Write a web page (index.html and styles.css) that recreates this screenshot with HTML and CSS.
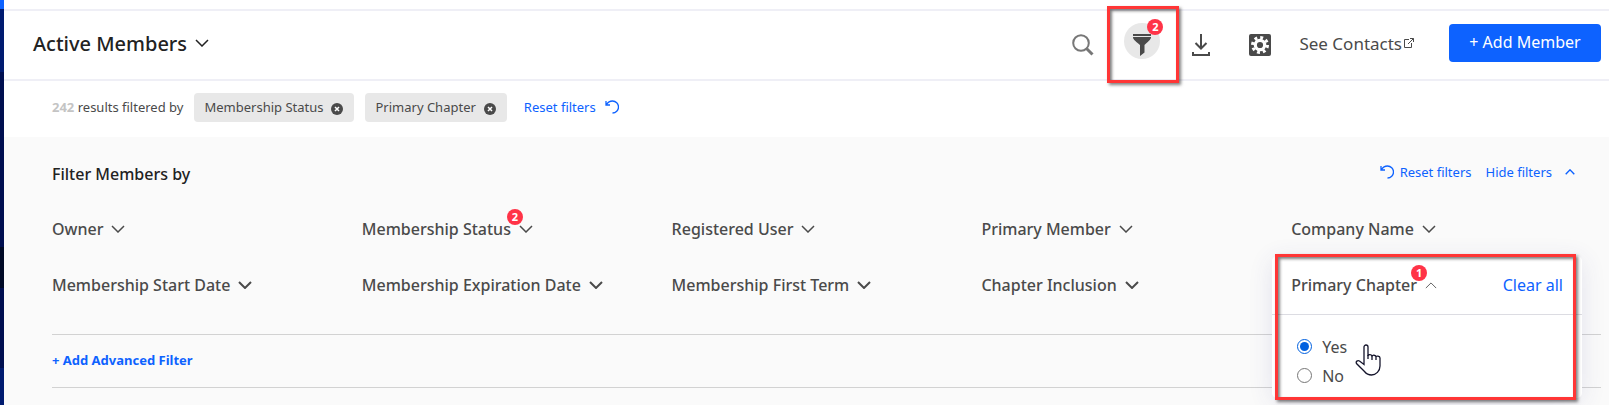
FILE: index.html
```html
<!DOCTYPE html>
<html lang="en">

<head>
    <meta charset="UTF-8">
    <meta name="viewport" content="width=device-width, initial-scale=1.0">
    <title>Active Members</title>
    <link rel="stylesheet" href="styles.css">
</head>

<body>
    <!-- shared icons -->
    <svg class="sprite" aria-hidden="true">
        <symbol id="down" viewBox="0 0 14 8">
            <path d="M1 1l6 6 6-6" fill="none" stroke="currentColor" />
        </symbol>
        <symbol id="up" viewBox="0 0 14 8">
            <path d="M1 7l6-6 6 6" fill="none" stroke="currentColor" />
        </symbol>
        <symbol id="reset" viewBox="0 0 14 14">
            <path d="M1 1v4h4M1.500 4.500C3 2 5 1 7.500 1a5.700 5.700 0 0 1 0 12" fill="none" stroke="currentColor" stroke-width="1.300" />
        </symbol>
        <symbol id="remove" viewBox="0 0 12 12">
            <circle cx="6" cy="6" r="6" fill="currentColor" />
            <path d="M4 4l4 4M8 4l-4 4" stroke="#fff" stroke-width="1.500" />
        </symbol>
    </svg>

    <div class="rail"></div>

    <div class="page">
        <header class="header">
            <button class="title">Active Members
                <svg class="chevron" width="14" height="8"><use href="#down" /></svg>
            </button>
            <div class="tools">
                <button class="tool search" aria-label="Search">
                    <svg width="22" height="22" viewBox="0 0 22 22">
                        <circle cx="9" cy="9" r="7.800" fill="none" stroke="currentColor" stroke-width="2" />
                        <path d="M14.500 14.500l6 6" stroke="currentColor" stroke-width="3" />
                    </svg>
                </button>
                <button class="tool on" aria-label="Filter">
                    <svg width="18" height="22" viewBox="0 0 18 22">
                        <path d="M0 0h18v2H0zM0 3h18c0 2-1 3-6.500 8v7.500L7 22V11C1 6 0 5 0 3z" fill="currentColor" />
                    </svg>
                    <span class="badge">2</span>
                    <span class="mark"></span>
                </button>
                <button class="tool" aria-label="Download">
                    <svg width="18" height="22" viewBox="0 0 18 22" fill="none" stroke="currentColor" stroke-width="2">
                        <path d="M9 0v14M3.500 9L9 14.500 14.500 9M1 18v3h16v-3" />
                    </svg>
                </button>
                <button class="tool" aria-label="Settings">
                    <svg width="22" height="22" viewBox="0 0 22 22">
                        <rect width="22" height="22" rx="2" fill="currentColor" />
                        <circle cx="11" cy="11" r="7.500" fill="none" stroke="#fff" stroke-width="3" stroke-dasharray="2.900 2.990" />
                        <circle cx="11" cy="11" r="4.700" fill="none" stroke="#fff" stroke-width="3.200" />
                    </svg>
                </button>
                <a class="contacts" href="#">See Contacts
                    <svg width="10" height="10" viewBox="0 0 10 10" fill="none" stroke="currentColor">
                        <path d="M5 1.500H.5v8h7V5M6 .5h3.500V4M9.500.5L4 6" />
                    </svg>
                </a>
                <button class="add">+ Add Member</button>
            </div>
        </header>

        <div class="results">
            <span><b>242</b> results filtered by</span>
            <button class="tag">Membership Status <svg width="12" height="12"><use href="#remove" /></svg></button>
            <button class="tag">Primary Chapter <svg width="12" height="12"><use href="#remove" /></svg></button>
            <button class="link">Reset filters <svg width="14" height="14"><use href="#reset" /></svg></button>
        </div>

        <main class="panel">
            <div class="panel_top">
                <h2>Filter Members by</h2>
                <div class="panel_links">
                    <button class="link"><svg width="14" height="14"><use href="#reset" /></svg> Reset filters</button>
                    <button class="link hide">Hide filters <svg class="chevron bold" width="10" height="6"><use href="#up" /></svg></button>
                </div>
            </div>

            <ul class="filters">
                <li><button class="filter">Owner <svg class="chevron" width="14" height="8"><use href="#down" /></svg></button></li>
                <li><button class="filter">Membership Status <svg class="chevron" width="14" height="8"><use href="#down" /></svg><span class="badge">2</span></button></li>
                <li><button class="filter">Registered User <svg class="chevron" width="14" height="8"><use href="#down" /></svg></button></li>
                <li><button class="filter">Primary Member <svg class="chevron" width="14" height="8"><use href="#down" /></svg></button></li>
                <li><button class="filter">Company Name <svg class="chevron" width="14" height="8"><use href="#down" /></svg></button></li>
                <li><button class="filter">Membership Start Date <svg class="chevron bold" width="14" height="8"><use href="#down" /></svg></button></li>
                <li><button class="filter">Membership Expiration Date <svg class="chevron bold" width="14" height="8"><use href="#down" /></svg></button></li>
                <li><button class="filter">Membership First Term <svg class="chevron bold" width="14" height="8"><use href="#down" /></svg></button></li>
                <li><button class="filter">Chapter Inclusion <svg class="chevron bold" width="14" height="8"><use href="#down" /></svg></button></li>
                <li>
                    <div class="dropdown">
                        <div class="dropdown_top">
                            <button class="filter">Primary Chapter <svg class="chevron thin" width="12" height="7"><use href="#up" /></svg><span class="badge">1</span></button>
                            <button class="clear">Clear all</button>
                        </div>
                        <div class="options">
                            <label><input type="radio" name="chapter" checked> Yes</label>
                            <label><input type="radio" name="chapter"> No</label>
                        </div>
                        <span class="mark"></span>
                        <svg class="hand" width="26" height="32" viewBox="0 0 26 32">
                            <path d="M9 19V3a2 2 0 0 1 4 0v9c0-2 4-2 4 .5 0-2 4-1.500 4 .5 0-1.500 4-1 4 1v8c0 5-4 9-8.500 9-3 0-5-1-7-3.500L1.500 19.500c-1-2 1-3.500 3-2.500L9 20.500z" fill="#fff" stroke="#14142b" stroke-width="1.300" />
                            <path d="M13 11v4M17 12v4M21 13v3" stroke="#14142b" stroke-width="1.300" />
                        </svg>
                    </div>
                </li>
            </ul>

            <div class="advanced">
                <button class="link">+ Add Advanced Filter</button>
            </div>
        </main>
    </div>
</body>

</html>
```
FILE: styles.css
```css
* {
    box-sizing: border-box;
    margin: 0;
    padding: 0;
    list-style: none;
}

body {
    display: flex;
    min-height: 100vh;
    overflow: hidden;
    background: #fff;
    color: #4a4a4a;
    font-family: "Noto Sans", sans-serif;
    font-size: 13px;
}

button {
    border: 0;
    background: none;
    color: inherit;
    font: inherit;
    cursor: pointer;
}

a {
    color: inherit;
    text-decoration: none;
}

.sprite {
    position: absolute;
    width: 0;
    height: 0;
}

.rail {
    flex: none;
    width: 4px;
    background: linear-gradient(#0d62ff 9px, #001b70 9px 72px, #000f50 72px 247px, #000a26 247px 288px, #000f50 288px 368px, #001b70 368px);
}

.page {
    flex: 1;
    display: flex;
    flex-direction: column;
    min-width: 0;
}

/* header */
.header {
    display: flex;
    justify-content: space-between;
    align-items: flex-start;
    height: 72px;
    margin-top: 9px;
    padding: 12px 8px 0 29px;
    border-top: 2px solid #efeff6;
    border-bottom: 2px solid #efeff6;
}

.title {
    display: flex;
    align-items: center;
    gap: 8px;
    height: 42px;
    padding-bottom: 2px;
    color: #222;
    font-size: 20px;
    font-weight: 500;
}

.chevron {
    flex: none;
    stroke-width: 1.5px;
}

.chevron.bold {
    stroke-width: 2px;
}

.chevron.thin {
    stroke-width: 1px;
}

.tools {
    display: flex;
    align-items: flex-start;
    gap: 23px;
}

.tool {
    position: relative;
    display: flex;
    justify-content: center;
    align-items: center;
    width: 36px;
    height: 36px;
    padding-top: 8px;
    border-radius: 50%;
}

.tool.on {
    background: #e8e8e8;
}

.search {
    color: #777;
}

.badge {
    position: absolute;
    width: 16px;
    height: 16px;
    border-radius: 50%;
    background: #ff3347;
    color: #fff;
    font-size: 11px;
    font-weight: 700;
    line-height: 16px;
    text-align: center;
}

.tool .badge {
    top: -4px;
    right: -3px;
}

/* red highlight frames */
.mark {
    position: absolute;
    border: 3px solid #ff3636;
    box-shadow: 2px 2px 3px rgba(0, 0, 0, .5), inset 2px 2px 3px rgba(0, 0, 0, .5);
    pointer-events: none;
}

.tool .mark {
    top: -17px;
    left: -17px;
    width: 72px;
    height: 77px;
}

.contacts {
    display: flex;
    align-items: center;
    gap: 2px;
    height: 42px;
    margin-left: -2px;
    padding-bottom: 2px;
    font-size: 17px;
}

.add {
    height: 38px;
    min-width: 152px;
    margin: 1px 0 0 12px;
    padding-bottom: 2px;
    border-radius: 4px;
    background: #0d62ff;
    color: #fff;
    font-size: 16px;
}

/* results */
.results {
    display: flex;
    align-items: center;
    gap: 11px;
    height: 56px;
    padding: 0 48px 4px;
}

.results b {
    color: #c4c4c4;
}

.tag {
    display: flex;
    align-items: center;
    gap: 8px;
    height: 29px;
    padding: 0 11px 0 10px;
    border-radius: 4px;
    background: #e8e8e8;
}

.tag svg {
    margin-top: 4px;
}

.link {
    display: flex;
    align-items: center;
    gap: 6px;
    color: #0d62ff;
}

.results .link {
    gap: 9px;
    margin-left: 6px;
}

/* filters */
.panel {
    flex: 1;
    padding: 20px 8px 17px 48px;
    background: #fafafa;
}

.panel_top {
    display: flex;
    justify-content: space-between;
    align-items: center;
    height: 34px;
    margin-bottom: 10px;
}

.panel_top h2 {
    color: #222;
    font-size: 16px;
    font-weight: 500;
}

.panel_links {
    display: flex;
    gap: 14px;
    margin-right: 26px;
    padding-bottom: 4px;
}

.panel_links .hide {
    gap: 13px;
}

.filters {
    display: grid;
    grid-template-columns: repeat(5, 1fr);
    grid-auto-rows: 56px;
    margin-bottom: 21px;
}

.filters li {
    position: relative;
    display: flex;
    align-items: center;
}

.filter {
    position: relative;
    display: flex;
    align-items: center;
    gap: 8px;
    font-size: 16px;
    font-weight: 500;
    white-space: nowrap;
}

.filter .badge {
    top: -9px;
    right: 10px;
}

.dropdown {
    position: absolute;
    top: -1px;
    left: -19px;
    width: 100%;
    border-radius: 5px;
    background: #fff;
    box-shadow: 0 4px 24px rgba(60, 60, 140, .12);
}

.dropdown_top {
    display: flex;
    justify-content: space-between;
    align-items: center;
    height: 59px;
    padding: 0 19px;
    border-bottom: 1px solid #dcdce2;
}

.clear {
    color: #0d62ff;
    font-size: 16px;
}

.options {
    padding: 17px 25px 8px;
}

.options label {
    display: flex;
    align-items: center;
    gap: 10px;
    height: 29px;
    font-size: 16px;
}

.options input {
    width: 15px;
    height: 15px;
    accent-color: #0060df;
}

.dropdown .mark {
    top: -2px;
    right: 6px;
    bottom: -2px;
    left: 3px;
}

.hand {
    position: absolute;
    top: 88px;
    left: 83px;
}

.advanced {
    display: flex;
    align-items: center;
    height: 54px;
    padding-bottom: 2px;
    border: solid #d2d2d2;
    border-width: 1px 0;
}

.advanced .link {
    font-weight: 700;
}
```
